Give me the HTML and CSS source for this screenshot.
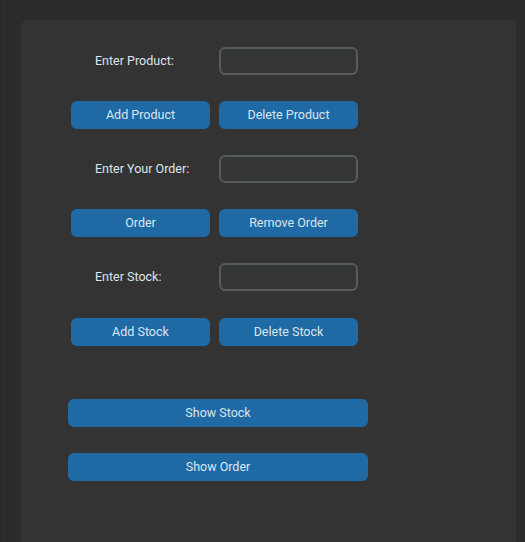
FILE: index.html
```html
<!DOCTYPE html>
<html>
<head>
<meta charset="utf-8">
<link rel="stylesheet" href="styles.css">
</head>
<body>
<div class="window">
  <div class="panel">
    <div class="form">
      <div class="label">Enter Product:</div>
      <div class="entry"></div>
      <button class="btn">Add Product</button>
      <button class="btn">Delete Product</button>

      <div class="label">Enter Your Order:</div>
      <div class="entry"></div>
      <button class="btn">Order</button>
      <button class="btn">Remove Order</button>

      <div class="label">Enter Stock:</div>
      <div class="entry"></div>
      <button class="btn last">Add Stock</button>
      <button class="btn last">Delete Stock</button>
    </div>
    <div class="actions">
      <button class="btn wide">Show Stock</button>
      <button class="btn wide">Show Order</button>
    </div>
  </div>
</div>
</body>
</html>
```
FILE: styles.css
```css
html, body {
  margin: 0;
  padding: 0;
  background: #2b2b2b;
  overflow: hidden;
}
.window {
  width: 525px;
  height: 542px;
  box-sizing: border-box;
  border-left: 1px solid #262626;
  padding: 20px 9px 0 20px;
  font-family: Roboto, "Noto Sans", sans-serif;
  font-size: 12.5px;
  color: #dce4ee;
}
.panel {
  background: #333333;
  border-radius: 6px 6px 0 0;
  height: 522px;
  box-sizing: border-box;
  padding: 27px 0 0 50px;
}
.form {
  display: grid;
  grid-template-columns: 139px 139px;
  grid-auto-rows: 28px;
  column-gap: 9px;
  row-gap: 26px;
}
.label {
  display: flex;
  align-items: center;
  padding-left: 24px;
  padding-bottom: 1px;
  white-space: nowrap;
}
.entry {
  box-sizing: border-box;
  border: 2px solid #565b5e;
  background: #343638;
  border-radius: 6px;
}
.btn {
  border: none;
  margin: 0;
  padding: 0 0 2px 0;
  background: #1f6aa5;
  color: #dce4ee;
  font-family: inherit;
  font-size: 12.5px;
  border-radius: 6px;
  height: 28px;
}
.btn.last {
  margin-top: 1px;
}
.actions {
  display: flex;
  flex-direction: column;
  gap: 26px;
  margin: 54px 0 0 -3px;
  width: 300px;
}
.wide {
  width: 300px;
}
```
